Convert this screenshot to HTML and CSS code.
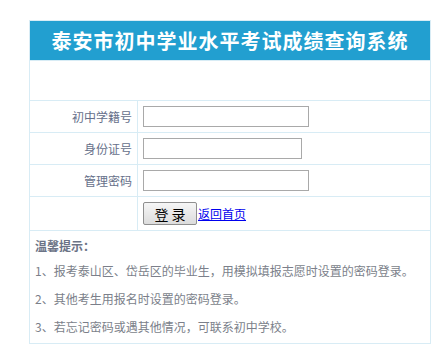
FILE: index.html
```html
<!DOCTYPE html>
<html lang="zh-CN">
<head>
    <meta charset="UTF-8" />
    <title>泰安市初中学业水平考试成绩查询系统</title>
    <link rel="stylesheet" href="styles.css">
</head>
<body>

    <form class="login-box">
        <table class="login-table">
            <tr>
                <th colspan="2" class="title">泰安市初中学业水平考试成绩查询系统</th>
            </tr>
            <tr>
                <td colspan="2" class="blank"></td>
            </tr>
            <tr class="field">
                <td class="label">初中学籍号</td>
                <td><input type="text" class="ipt"></td>
            </tr>
            <tr class="field">
                <td class="label">身份证号</td>
                <td><input type="text" class="ipt short"></td>
            </tr>
            <tr class="field">
                <td class="label">管理密码</td>
                <td><input type="password" class="ipt"></td>
            </tr>
            <tr class="actions">
                <td></td>
                <td><button type="button" class="btn">登 录</button><a href="#" class="back">返回首页</a></td>
            </tr>
            <tr>
                <td colspan="2" class="tips">
                    <p class="tips-title">温馨提示：</p>
                    <p>1、报考泰山区、岱岳区的毕业生，用模拟填报志愿时设置的密码登录。</p>
                    <p>2、其他考生用报名时设置的密码登录。</p>
                    <p>3、若忘记密码或遇其他情况，可联系初中学校。</p>
                </td>
            </tr>
        </table>
    </form>

</body>
</html>
```

FILE: styles.css
```css
body {
    margin: 0;
    padding: 20px 0 0 29px;
    background: #fff;
    font-family: "Noto Sans CJK SC", "Noto Sans", sans-serif;
    font-size: 12px;
}

.login-box {
    margin: 0;
    width: 402px;
}

.login-table {
    width: 402px;
    border-collapse: collapse;
    border: 1px solid #d8ecf5;
}

.login-table td,
.login-table th {
    border: 1px solid #d8ecf5;
    padding: 0;
}

.title {
    height: 39px;
    background: #229fd0;
    color: #fff;
    font-size: 20px;
    letter-spacing: 1px;
    font-weight: bold;
    text-align: center;
    line-height: 39px;
}

.blank {
    height: 39px;
}

.field td {
    height: 31px;
}

.label {
    width: 102px;
    padding-right: 5px !important;
    text-align: right;
    color: #66708a;
    font-size: 12px;
}

.field td + td,
.actions td + td {
    padding-left: 5px;
}

.ipt {
    display: block;
    width: 166px;
    height: 21px;
    box-sizing: border-box;
    border: 1px solid #a9a9a9;
    margin: 0;
    padding: 0 3px;
}

.ipt.short {
    width: 159px;
}

.actions td {
    height: 33px;
}

.btn {
    width: 54px;
    height: 23px;
    margin: 0 1px 0 0;
    padding: 0;
    border: 1px solid #8f8f8f;
    border-radius: 2px;
    background: linear-gradient(#f6f6f6, #dcdcdc);
    color: #000;
    font-family: "Noto Sans CJK SC", sans-serif;
    font-size: 14px;
    vertical-align: middle;
}

.back {
    color: #0000ee;
    font-size: 12px;
    vertical-align: middle;
}

.tips {
    padding: 4px 5px 2px !important;
    color: #7b7f8a;
    font-size: 12px;
}

.tips p {
    margin: 0;
    line-height: 28px;
}

.tips .tips-title {
    font-weight: bold;
    color: #6b7386;
    line-height: 22px;
}
```
